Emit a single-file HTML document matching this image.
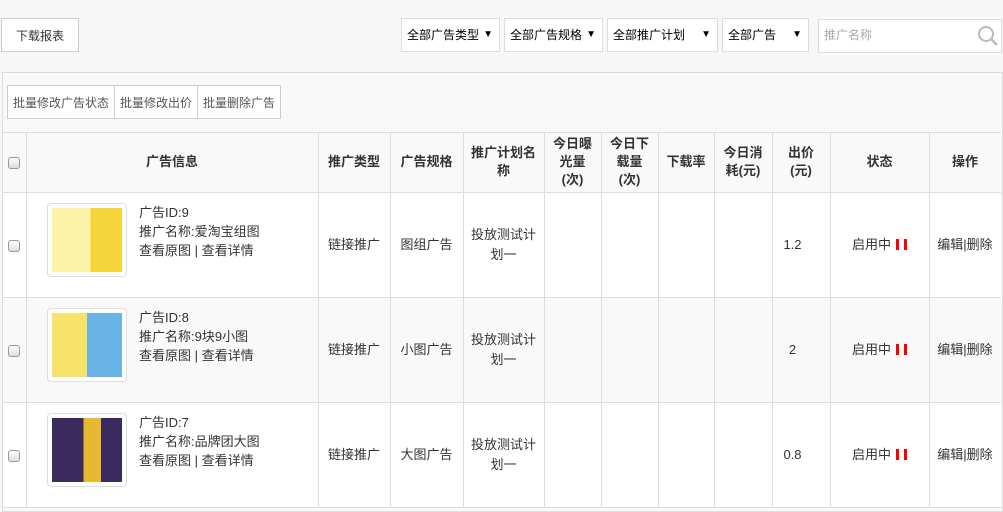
<!DOCTYPE html>
<html><head><meta charset="utf-8"><style>
*{margin:0;padding:0;box-sizing:border-box}
body{width:1003px;height:512px;background:#f7f7f7;font-family:"Liberation Sans","Noto Sans CJK SC",sans-serif;font-size:13px;color:#333;position:relative;overflow:hidden}
.a{position:absolute}
.btn{position:absolute;border:1px solid #ccc;background:#fff;display:flex;align-items:center;justify-content:center;color:#333}
.sel{position:absolute;top:18px;height:34px;border:1px solid #ddd;background:#fff;font-size:12px;color:#000;padding-left:5px;line-height:32px}
.sel b{position:absolute;right:6px;top:0;font-size:10px;font-weight:normal}
.vl{position:absolute;width:1px;background:#dcdde1;top:132px;height:376px}
.hl{position:absolute;height:1px;background:#dcdde1;left:2px;width:999px}
.c{position:absolute;text-align:center;display:flex;align-items:center;justify-content:center;line-height:18px}
.h{font-weight:bold;font-size:13px}
.cb{position:absolute;left:8px;width:12px;height:12px;border:1px solid #999;border-radius:3px;background:linear-gradient(#fff,#ddd)}
.thumb{position:absolute;left:47px;width:80px;height:74px;border:1px solid #ddd;border-radius:4px;background:#fff}
.thumb div{position:absolute;left:4px;top:4px;width:70px;height:64px}
.info{position:absolute;left:139px;line-height:19px;font-size:13px;color:#333}
.red{display:inline-block;width:3px;height:11px;background:#f00;margin-left:5px;vertical-align:-1px}
</style></head><body>
<div class="btn" style="left:1px;top:18px;width:78px;height:34px;font-size:12px">下载报表</div>
<div class="sel" style="left:401px;width:99px">全部广告类型<b>▼</b></div>
<div class="sel" style="left:504px;width:99px">全部广告规格<b>▼</b></div>
<div class="sel" style="left:607px;width:111px">全部推广计划<b>▼</b></div>
<div class="sel" style="left:722px;width:87px">全部广告<b>▼</b></div>
<div class="a" style="left:818px;top:19px;width:184px;height:34px;border:1px solid #ddd;background:#fff;color:#aaa;line-height:30px;padding-left:5px;font-size:12px">推广名称
<svg class="a" style="right:2px;top:5px" width="22" height="22" viewBox="0 0 22 22"><circle cx="9" cy="9" r="7" fill="none" stroke="#bbb" stroke-width="2"/><line x1="14" y1="14" x2="20" y2="20" stroke="#bbb" stroke-width="2.5"/></svg></div>

<div class="a" style="left:2px;top:72px;width:1001px;height:440px;border:1px solid #dcdde1;background:#f9f9f9"></div>
<div class="btn" style="left:7px;top:85px;width:108px;height:34px;color:#555;font-size:12px">批量修改广告状态</div>
<div class="btn" style="left:114px;top:85px;width:84px;height:34px;color:#555;font-size:12px">批量修改出价</div>
<div class="btn" style="left:197px;top:85px;width:84px;height:34px;color:#555;font-size:12px">批量删除广告</div>

<div class="a" style="left:3px;top:192px;width:998px;height:105px;background:#fff"></div>
<div class="a" style="left:3px;top:402px;width:998px;height:105px;background:#fff"></div>
<div class="hl" style="top:132px"></div>
<div class="hl" style="top:192px"></div>
<div class="hl" style="top:297px"></div>
<div class="hl" style="top:402px"></div>
<div class="hl" style="top:507px"></div>
<div class="vl" style="left:26px"></div><div class="vl" style="left:318px"></div><div class="vl" style="left:390px"></div><div class="vl" style="left:463px"></div><div class="vl" style="left:544px"></div><div class="vl" style="left:601px"></div><div class="vl" style="left:658px"></div><div class="vl" style="left:714px"></div><div class="vl" style="left:772px"></div><div class="vl" style="left:830px"></div><div class="vl" style="left:929px"></div>

<div class="cb" style="top:157px"></div>
<div class="c h" style="left:26px;top:132px;width:292px;height:60px">广告信息</div>
<div class="c h" style="left:318px;top:132px;width:72px;height:60px">推广类型</div>
<div class="c h" style="left:390px;top:132px;width:73px;height:60px">广告规格</div>
<div class="c h" style="left:463px;top:132px;width:81px;height:60px">推广计划名<br>称</div>
<div class="c h" style="left:544px;top:132px;width:57px;height:60px">今日曝<br>光量<br>(次)</div>
<div class="c h" style="left:601px;top:132px;width:57px;height:60px">今日下<br>载量<br>(次)</div>
<div class="c h" style="left:658px;top:132px;width:56px;height:60px">下载率</div>
<div class="c h" style="left:714px;top:132px;width:58px;height:60px">今日消<br>耗(元)</div>
<div class="c h" style="left:772px;top:132px;width:58px;height:60px">出价<br>(元)</div>
<div class="c h" style="left:830px;top:132px;width:99px;height:60px">状态</div>
<div class="c h" style="left:929px;top:132px;width:72px;height:60px">操作</div>

<!-- row1 -->
<div class="cb" style="top:240px"></div>
<div class="thumb" style="top:203px"><div style="background:linear-gradient(90deg,#fdf3a8 55%,#f5d53a 55%)"></div></div>
<div class="info" style="top:203px">广告ID:9<br>推广名称:爱淘宝组图<br>查看原图 | 查看详情</div>
<div class="c" style="left:318px;top:192px;width:72px;height:105px">链接推广</div>
<div class="c" style="left:390px;top:192px;width:73px;height:105px">图组广告</div>
<div class="c" style="left:463px;top:192px;width:81px;height:105px;line-height:20px">投放测试计<br>划一</div>
<div class="c" style="left:772px;top:192px;width:41px;height:105px">1.2</div>
<div class="c" style="left:830px;top:192px;width:99px;height:105px">启用中 <span class="red"></span><span class="red"></span></div>
<div class="c" style="left:929px;top:192px;width:72px;height:105px">编辑|删除</div>
<!-- row2 -->
<div class="cb" style="top:345px"></div>
<div class="thumb" style="top:308px"><div style="background:linear-gradient(90deg,#f7e36a 50%,#6ab3e6 50%)"></div></div>
<div class="info" style="top:308px">广告ID:8<br>推广名称:9块9小图<br>查看原图 | 查看详情</div>
<div class="c" style="left:318px;top:297px;width:72px;height:105px">链接推广</div>
<div class="c" style="left:390px;top:297px;width:73px;height:105px">小图广告</div>
<div class="c" style="left:463px;top:297px;width:81px;height:105px;line-height:20px">投放测试计<br>划一</div>
<div class="c" style="left:772px;top:297px;width:41px;height:105px">2</div>
<div class="c" style="left:830px;top:297px;width:99px;height:105px">启用中 <span class="red"></span><span class="red"></span></div>
<div class="c" style="left:929px;top:297px;width:72px;height:105px">编辑|删除</div>
<!-- row3 -->
<div class="cb" style="top:450px"></div>
<div class="thumb" style="top:413px"><div style="background:linear-gradient(90deg,#3b2a5e 45%,#e8b830 45%,#e8b830 70%,#3b2a5e 70%)"></div></div>
<div class="info" style="top:413px">广告ID:7<br>推广名称:品牌团大图<br>查看原图 | 查看详情</div>
<div class="c" style="left:318px;top:402px;width:72px;height:105px">链接推广</div>
<div class="c" style="left:390px;top:402px;width:73px;height:105px">大图广告</div>
<div class="c" style="left:463px;top:402px;width:81px;height:105px;line-height:20px">投放测试计<br>划一</div>
<div class="c" style="left:772px;top:402px;width:41px;height:105px">0.8</div>
<div class="c" style="left:830px;top:402px;width:99px;height:105px">启用中 <span class="red"></span><span class="red"></span></div>
<div class="c" style="left:929px;top:402px;width:72px;height:105px">编辑|删除</div>
</body></html>
